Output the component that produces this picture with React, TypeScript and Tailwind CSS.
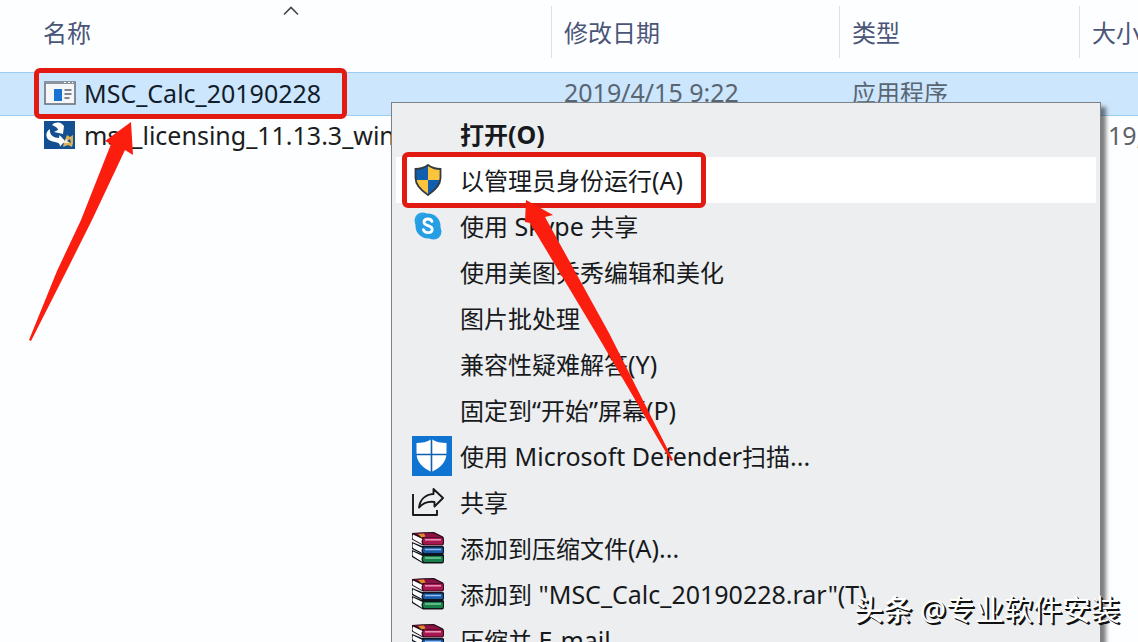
import type { ReactNode } from "react";

const CJK = "font-['Noto_Sans','Noto_Sans_CJK_SC',sans-serif]";

/** Sets Latin runs one step larger than the Chinese glyphs around them. */
function Mixed({ text }: { text: string }) {
  const runs = text.split(/([\x20-\x7e“”]+)/).filter(Boolean);
  return (
    <>
      {runs.map((run, i) =>
        /^[\x20-\x7e“”]+$/.test(run) ? (
          <span key={i} className="font-['Noto_Sans',sans-serif] text-[25px] whitespace-pre">{run}</span>
        ) : (
          <span key={i} className="font-['Noto_Sans_CJK_SC',sans-serif]">{run}</span>
        ),
      )}
    </>
  );
}

function AppIcon() {
  return (
    <svg className="h-6 w-8 shrink-0" viewBox="0 0 32 24" aria-hidden="true">
      <rect x="1" y="1" width="30" height="22" fill="#f4f6f8" stroke="#6d747c" strokeWidth="1.6" />
      <rect x="1" y="0" width="30" height="3" fill="#8b949d" />
      <path d="M20 1.500h2M24 1.500h2M28 1.500h1" stroke="#fff" strokeWidth="1" />
      <rect x="10" y="8" width="8" height="12" fill="#1673d2" />
      <path d="M20.500 9h7M20.500 13h7M20.500 17h5" stroke="#59636e" strokeWidth="1.400" />
    </svg>
  );
}

function LicensingIcon() {
  return (
    <svg className="h-7 w-8 shrink-0" viewBox="0 0 32 28" aria-hidden="true">
      <rect x="0" y="0" width="31" height="28" fill="#134f91" />
      <path d="M8 4c3-3 7-3 10-1l2 2-1 8-9-2 4-2c0-2-2-3-6-5z" fill="#fff" />
      <path d="M6 8C1 11 1 18 7 20c4 1.500 7 1 8.500 3l.5 2.500 5-5.500-5.500-6-.5 3C10 17 5 14 6 8z" fill="#fff" />
      <path d="M23 14l3 2 3-2v8l-1 4-4-2-5 2 1-5z" fill="#d9b25c" />
      <path d="M18 22l5-4 2 4z" fill="#f4ead0" />
      <path d="M23 20l3-2 1 4z" fill="#134f91" />
    </svg>
  );
}

const SHIELD = "M14 1C10 4 6 5 1.500 5v9c0 7 5 12 12.500 17 7.500-5 12.500-10 12.500-17V5C22 5 18 4 14 1z";

function AdminShield() {
  return (
    <svg className="ml-0.5 h-8 w-7" viewBox="0 0 28 32" aria-hidden="true">
      <clipPath id="shield-clip"><path d={SHIELD} /></clipPath>
      <g clipPath="url(#shield-clip)">
        <rect width="14" height="16" fill="#0f5fae" />
        <rect x="14" width="14" height="16" fill="#fcc43d" />
        <rect y="16" width="14" height="16" fill="#fcc43d" />
        <rect x="14" y="16" width="14" height="16" fill="#0f5fae" />
      </g>
      <path d={SHIELD} fill="none" stroke="#323b44" strokeWidth="1.800" />
    </svg>
  );
}

function SkypeIcon() {
  return (
    <svg className="ml-0.5 h-7 w-7" viewBox="0 0 28 28" aria-hidden="true">
      <circle cx="8.500" cy="8.500" r="8" fill="#2ba3e6" />
      <circle cx="19.500" cy="19.500" r="8" fill="#259ee4" />
      <circle cx="14" cy="14" r="12.500" fill="#259ee4" />
      <path d="M18 9.500c-.6-1.800-2-2.500-4-2.500-2.400 0-4 1.200-4 3.200 0 4.300 8.200 2.600 8.200 7 0 2.200-1.800 3.500-4.300 3.500-2.200 0-3.900-.9-4.500-3" fill="none" stroke="#fff" strokeWidth="2.800" strokeLinecap="round" />
    </svg>
  );
}

function DefenderIcon() {
  return (
    <svg className="h-10 w-10" viewBox="0 0 40 40" aria-hidden="true">
      <rect width="40" height="40" fill="#0f74d1" />
      <path d="M19.500 3C15 6 10 7 4.500 7v10c0 9 6 14.500 15 19 9-4.500 15-10 15-19V7C29 7 24 6 19.500 3z" fill="#fff" />
      <path d="M19.500 3v33M4 18.500h31" stroke="#0f5fae" strokeWidth="1.600" />
    </svg>
  );
}

function ShareIcon() {
  return (
    <svg className="h-7 w-8" viewBox="0 0 32 28" fill="none" stroke="#17191c" strokeWidth="1.900" strokeLinejoin="round" aria-hidden="true">
      <path d="M1 6v21h24v-5" />
      <path d="M21.500 1L31 10l-8.500 8.500V14C15 13 11 15 7 19.500 8 11.500 13.500 6.500 21.500 6z" />
    </svg>
  );
}

function RarIcon() {
  return (
    <svg className="h-8 w-8" viewBox="0 0 32 32" aria-hidden="true">
      <path d="M0 18l10 4h20q3 0 2 3v4q0 2.500-2 2.500H11L0 25z" fill="#10141a" />
      <path d="M12 24h18.500q1.500 3 0 6H12q-2.500-3 0-6z" fill="#178048" />
      <path d="M13 26h16" stroke="#7dcb9e" strokeWidth="1.500" />
      <path d="M1 19.500l9.500 4.500q-2 3 0 6L1 24q-1-2 0-4.500z" fill="#fff" />
      <path d="M0 10l10 4h20q3 0 2 3v3q0 2.500-2 2.500H11L0 17z" fill="#0d1422" />
      <path d="M12 15.500h18.500q1.500 3 0 5.500H12q-2.500-3 0-5.500z" fill="#1b5aa6" />
      <path d="M13 17.500h16" stroke="#8fbcf0" strokeWidth="1.500" />
      <path d="M1 11.500l9.500 4.500q-2 2.500 0 5L1 16q-1-2 0-4.500z" fill="#fff" />
      <path d="M0 1q10-1 22-1l9 4.500q1 1 1 3v3q0 3-2 3H11L0 7.500z" fill="#260a18" />
      <path d="M2 1.200h19.500l9 4.300H12z" fill="#8e1245" />
      <path d="M12 6h18.500q1.500 3 0 6.500H12q-2.500-3 0-6.500z" fill="#a8174f" />
      <path d="M13 7.800h16" stroke="#e39ab8" strokeWidth="1.500" />
      <path d="M1 2.500l9.500 4.500q-2 2.500 0 5.200L1 7q-1-2 0-4.500z" fill="#fff" />
      <path d="M6 2l6-.5 1.500 3-4 1z" fill="#dd8c28" />
    </svg>
  );
}

type Item = { label: string; icon?: ReactNode; bold?: boolean; active?: boolean };

const items: Item[] = [
  { label: "打开(O)", bold: true },
  { label: "以管理员身份运行(A)", icon: <AdminShield />, active: true },
  { label: "使用 Skype 共享", icon: <SkypeIcon /> },
  { label: "使用美图秀秀编辑和美化" },
  { label: "图片批处理" },
  { label: "兼容性疑难解答(Y)" },
  { label: "固定到“开始”屏幕(P)" },
  { label: "使用 Microsoft Defender扫描...", icon: <DefenderIcon /> },
  { label: "共享", icon: <ShareIcon /> },
  { label: "添加到压缩文件(A)...", icon: <RarIcon /> },
  { label: '添加到 "MSC_Calc_20190228.rar"(T)', icon: <RarIcon /> },
  { label: "压缩并 E-mail", icon: <RarIcon /> },
];

function ContextMenu() {
  return (
    <div role="menu" className="absolute top-[102px] right-[37px] left-[391px] border border-[#7d8288] bg-[#eceeef] px-1 pt-2 pb-2 shadow-[5px_5px_4px_rgba(0,0,0,0.5)]">
      {items.map((item) => (
        <button
          key={item.label}
          type="button"
          role="menuitem"
          className={`flex h-[46px] w-full items-center pl-4 text-left whitespace-nowrap ${item.active ? "bg-white" : ""} ${item.bold ? "font-bold" : ""}`}
        >
          <span className="flex w-12 shrink-0 items-center">{item.icon}</span>
          <span className="leading-[46px]"><Mixed text={item.label} /></span>
        </button>
      ))}
    </div>
  );
}

function FileTable() {
  const head = "relative h-[72px] pb-1.5 pl-[13px] text-left font-normal text-[#4a5578]";
  const divider = <span className="absolute top-1.5 left-0 h-[52px] w-px bg-[#dfe1e4]" />;
  return (
    <table className="w-full table-fixed border-collapse whitespace-nowrap">
      <colgroup>
        <col className="w-[551px]" />
        <col className="w-[288px]" />
        <col className="w-[240px]" />
        <col />
      </colgroup>
      <thead>
        <tr>
          <th scope="col" className="relative h-[72px] pb-1.5 pl-[43px] text-left font-normal text-[#4a5578]">
            名称
            <svg className="absolute top-1.5 left-[283px] h-2.5 w-4" viewBox="0 0 16 10" fill="none" stroke="#42464c" strokeWidth="1.600" aria-hidden="true">
              <path d="M1 8.500L8 1.500l7 7" />
            </svg>
          </th>
          <th scope="col" className={head}>{divider}修改日期</th>
          <th scope="col" className={head}>{divider}类型</th>
          <th scope="col" className={head}>{divider}大小</th>
        </tr>
      </thead>
      <tbody>
        <tr className="h-[43px] border-y border-[#9dcdf0] bg-[#cce6fd] text-[#5a6572]">
          <td className="pb-0.5 pl-11 text-[#121d2b]">
            <span className="flex items-center gap-2"><AppIcon /><Mixed text="MSC_Calc_20190228" /></span>
          </td>
          <td className="pb-0.5 pl-[13px]"><Mixed text="2019/4/15 9:22" /></td>
          <td className="pb-0.5 pl-[13px]">应用程序</td>
          <td />
        </tr>
        <tr className="h-[42px] text-[#5f6368]">
          <td className="pb-0.5 pl-11 text-[#1b1d20]">
            <span className="flex items-center gap-2"><LicensingIcon /><Mixed text="msc_licensing_11.13.3_wind" /></span>
          </td>
          <td />
          <td />
          <td className="pb-0.5 pl-[29px]"><Mixed text="19," /></td>
        </tr>
      </tbody>
    </table>
  );
}

function Annotations() {
  return (
    <>
      <div className="absolute top-[68px] left-[34px] h-[51px] w-[313px] rounded-md border-[5px] border-[#e21b12]" />
      <div className="absolute top-[152px] left-[402px] h-[56px] w-[304px] rounded-md border-[5px] border-[#e21b12]" />
      <svg className="pointer-events-none absolute top-0 left-0 h-[480px] w-[700px]" viewBox="0 0 700 480" fill="#fb1d0e" aria-hidden="true">
        <path d="M131 122L105 141l6 3L81 220 57 271 29 340l2 1L66 272 92 220 125 150l8 5z" />
        <path d="M526 200l-1 22 5 1L596 333l75 128 2-1L609 333 545 217l8-2z" />
      </svg>
    </>
  );
}

export default function App() {
  return (
    <main className={`relative min-h-screen overflow-hidden bg-[#fdfeff] text-2xl leading-8 text-[#17191c] ${CJK}`}>
      <FileTable />
      <ContextMenu />
      <Annotations />
      <p className="absolute right-[18px] bottom-3 text-[29px] leading-10 whitespace-nowrap text-white [text-shadow:1px_1px_0_#111,2px_2px_0_#111]">
        <span className="font-medium">头条</span> @专业软件安装
      </p>
    </main>
  );
}
